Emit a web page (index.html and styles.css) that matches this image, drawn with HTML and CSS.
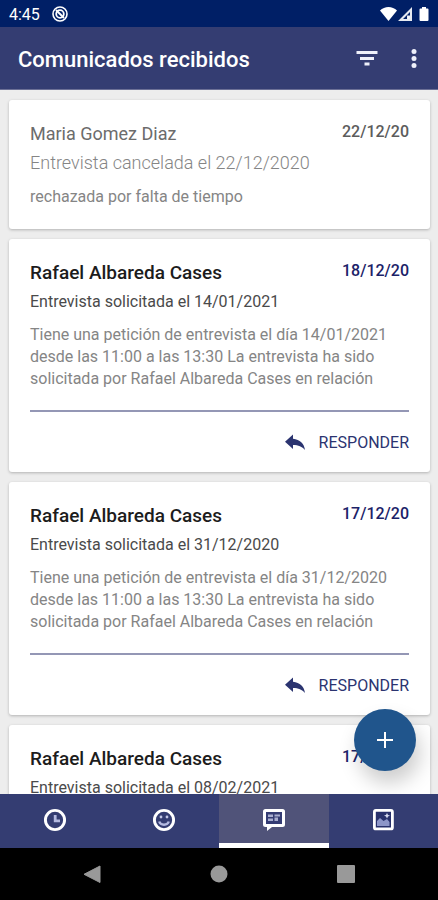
FILE: index.html
```html
<!DOCTYPE html>
<html lang="es">
<head>
    <meta charset="utf-8">
    <meta name="viewport" content="width=device-width, initial-scale=1">
    <title>Comunicados recibidos</title>
    <link rel="stylesheet" href="styles.css">
</head>
<body>
    <div class="status-bar">
        <span>4:45</span>
        <svg class="status-app" width="16" height="16" viewBox="0 0 16 16" fill="none" stroke="#fff">
            <circle cx="8" cy="8" r="7" stroke-width="1.6"/>
            <circle cx="8" cy="8" r="3.8" stroke-width="1.8"/>
            <path d="M4 4l8 8" stroke-width="2"/>
        </svg>
        <svg class="status-icons" width="50" height="16" viewBox="0 0 50 16" fill="#fff">
            <path d="M0 4.500C4.500-.2 12.500-.2 17 4.500L8.500 15z"/>
            <path d="M32 1v14H18zM30 6l-7 7h4V9.500h3z" fill-rule="evenodd" opacity=".9"/>
            <path d="M27.500 10h2v3h-2z" opacity=".6"/>
            <path d="M42 1h4v1.500h1.500q1 0 1 1V14q0 1-1 1h-7q-1 0-1-1V3.500q0-1 1-1H42z"/>
        </svg>
    </div>

    <header class="app-bar">
        <h1>Comunicados recibidos</h1>
        <button type="button" class="icon-button" aria-label="Filtrar">
            <svg width="24" height="24" viewBox="0 0 24 24" fill="#eef0fa">
                <path d="M1.500 4h21v3h-21zM5 10h14v3H5zM9.500 15.500h5v3h-5z"/>
            </svg>
        </button>
        <button type="button" class="icon-button" aria-label="Más opciones">
            <svg width="24" height="24" viewBox="0 0 24 24" fill="#eef0fa">
                <circle cx="12" cy="4.500" r="2.500"/>
                <circle cx="12" cy="11.500" r="2.500"/>
                <circle cx="12" cy="18.500" r="2.500"/>
            </svg>
        </button>
    </header>

    <main class="list">
        <article class="card card-read">
            <div class="card-head">
                <h2>Maria Gomez Diaz</h2>
                <time>22/12/20</time>
            </div>
            <h3>Entrevista cancelada el 22/12/2020</h3>
            <p>rechazada por falta de tiempo</p>
        </article>

        <article class="card">
            <div class="card-head">
                <h2>Rafael Albareda Cases</h2>
                <time>18/12/20</time>
            </div>
            <h3>Entrevista solicitada el 14/01/2021</h3>
            <p>Tiene una petición de entrevista el día 14/01/2021 desde las 11:00 a las 13:30 La entrevista ha sido solicitada por Rafael Albareda Cases en relación</p>
            <div class="card-actions">
                <button type="button" class="reply">
                    <svg width="20" height="16" viewBox="0 0 20 16" fill="#2b3470"><path d="M8 .5v4.300c7 .8 11 4.700 12 11.200C17 12.500 13.500 11 8 11v4L0 7.700z"/></svg>
                    RESPONDER
                </button>
            </div>
        </article>

        <article class="card">
            <div class="card-head">
                <h2>Rafael Albareda Cases</h2>
                <time>17/12/20</time>
            </div>
            <h3>Entrevista solicitada el 31/12/2020</h3>
            <p>Tiene una petición de entrevista el día 31/12/2020 desde las 11:00 a las 13:30 La entrevista ha sido solicitada por Rafael Albareda Cases en relación</p>
            <div class="card-actions">
                <button type="button" class="reply">
                    <svg width="20" height="16" viewBox="0 0 20 16" fill="#2b3470"><path d="M8 .5v4.300c7 .8 11 4.700 12 11.200C17 12.500 13.500 11 8 11v4L0 7.700z"/></svg>
                    RESPONDER
                </button>
            </div>
        </article>

        <article class="card">
            <div class="card-head">
                <h2>Rafael Albareda Cases</h2>
                <time>17/12/20</time>
            </div>
            <h3>Entrevista solicitada el 08/02/2021</h3>
        </article>
    </main>

    <div class="bottom">
        <button type="button" class="fab" aria-label="Nuevo comunicado">
            <svg width="16" height="16" viewBox="0 0 16 16" stroke="#fff" stroke-width="2"><path d="M8 0v16M0 8h16"/></svg>
        </button>
        <nav class="tabs">
            <a href="#" class="tab" aria-label="Horario">
                <svg width="24" height="24" viewBox="0 0 24 24" fill="none" stroke="#fff">
                    <circle cx="12" cy="12" r="9.600" stroke-width="2.900"/>
                    <path d="M12.200 7v5.800H17" stroke="#b4bae0" stroke-width="2.800"/>
                </svg>
            </a>
            <a href="#" class="tab" aria-label="Alumno">
                <svg width="24" height="24" viewBox="0 0 24 24" fill="none" stroke="#fff">
                    <circle cx="12" cy="12" r="9.600" stroke-width="2.900"/>
                    <path d="M7.200 13.500c1.300 4.300 8.300 4.300 9.600 0" stroke="#b4bae0" stroke-width="2.400"/>
                    <circle cx="9" cy="9" r="1.400" fill="#c3c8e6" stroke="none"/>
                    <circle cx="15" cy="9" r="1.400" fill="#c3c8e6" stroke="none"/>
                </svg>
            </a>
            <a href="#" class="tab tab-active" aria-label="Comunicados">
                <svg width="24" height="24" viewBox="0 0 24 24">
                    <path d="M3.500 1h17Q23 1 23 3.500v13q0 2.500-2.500 2.500H10l-5 4v-4H3.500Q1 19 1 16.500v-13Q1 1 3.500 1z" fill="#fff"/>
                    <path d="M4 4h16v12H4z" fill="#343c73"/>
                    <path d="M6 6.500h5V9H6zM6 10.500h5V13H6zM12.500 6.500H18V8.500h-5.500zM12.500 9.500H16V13h-3.500z" fill="#a9aed0"/>
                </svg>
            </a>
            <a href="#" class="tab" aria-label="Galería">
                <svg width="24" height="24" viewBox="0 0 24 24">
                    <rect x="3.400" y="2.400" width="18" height="18.500" rx="1.500" fill="#27306b" stroke="#fff" stroke-width="2.800"/>
                    <path d="M6 18v-5l3-3 3.500 3L16 11l2.500 3v4z" fill="#8d96c8"/>
                    <path d="M16 5l1 2 2 .5-2 1-1 2-1-2-2-1 2-.5z" fill="#d6daf0"/>
                </svg>
            </a>
        </nav>
    </div>

    <div class="system-nav">
        <button type="button" aria-label="Atrás">
            <svg width="18" height="18" viewBox="0 0 18 18" fill="#999"><path d="M17 1v16.500L1 9.300z" stroke="#999" stroke-linejoin="round"/></svg>
        </button>
        <button type="button" aria-label="Inicio">
            <svg width="18" height="18" viewBox="0 0 18 18" fill="#999"><circle cx="9" cy="9" r="8.500"/></svg>
        </button>
        <button type="button" aria-label="Recientes">
            <svg width="18" height="18" viewBox="0 0 18 18" fill="#999"><rect width="18" height="18" rx="1"/></svg>
        </button>
    </div>
</body>
</html>
```

FILE: styles.css
```css
* {
    box-sizing: border-box;
}
body {
    margin: 0;
    height: 100vh;
    display: flex;
    flex-direction: column;
    font-family: Roboto, sans-serif;
    background-color: #ededed;
    overflow: hidden;
}
h1, h2, h3, p {
    margin: 0;
}
button {
    font-family: inherit;
    border: none;
    background: none;
    padding: 0;
    cursor: pointer;
}
svg {
    display: block;
    flex: none;
}

/* top */
.status-bar {
    flex: none;
    display: flex;
    align-items: center;
    height: 27px;
    padding: 1px 8px 0 9px;
    background-color: #001f66;
    color: #fff;
    font-size: 16px;
}
.status-app {
    margin-left: 12px;
}
.status-icons {
    margin-left: auto;
}
.app-bar {
    flex: none;
    display: flex;
    align-items: center;
    height: 63px;
    padding: 2px 12px 0 18px;
    background-color: #343d72;
    border-bottom: 1px solid #6c7096;
    color: #fff;
}
.app-bar h1 {
    flex: 1;
    padding-top: 2px;
    font-size: 22px;
    font-weight: 500;
    line-height: 32px;
}
.icon-button + .icon-button {
    margin-left: 23px;
}

/* messages */
.list {
    flex: 1;
    min-height: 0;
    display: flex;
    flex-direction: column;
    gap: 10px;
    padding: 10px 8px 0 9px;
    overflow: hidden;
}
.card {
    flex: none;
    padding: 22px 21px 0;
    background-color: #fff;
    border-radius: 3px;
    box-shadow: 0 1px 3px rgba(0, 0, 0, 0.25);
}
.card-head {
    display: flex;
    justify-content: space-between;
}
.card h2 {
    font-size: 19px;
    font-weight: 500;
    line-height: 24px;
    color: #1c1c1c;
}
.card time {
    font-size: 16px;
    font-weight: 500;
    line-height: 20px;
    color: #1b2268;
}
.card h3 {
    margin-top: 5px;
    font-size: 16px;
    font-weight: 400;
    line-height: 24px;
    color: #4a4a4a;
}
.card p {
    margin-top: 10px;
    font-size: 16px;
    line-height: 22px;
    color: #858585;
}
.card-actions {
    display: flex;
    justify-content: flex-end;
    height: 62px;
    margin-top: 20px;
    border-top: 2px solid #9497b5;
}
.reply {
    display: flex;
    align-items: center;
    gap: 14px;
    font-size: 16px;
    color: #2b3470;
}
.card-read {
    padding-bottom: 21px;
}
.card.card-read h2 {
    font-size: 18px;
    font-weight: 400;
    color: #6c6c6c;
}
.card.card-read time {
    color: #5c5c5c;
}
.card.card-read h3 {
    font-size: 18px;
    font-weight: 300;
    color: #858585;
}
.card.card-read p {
    margin-top: 11px;
}

/* bottom */
.bottom {
    flex: none;
    position: relative;
}
.fab {
    position: absolute;
    right: 22px;
    bottom: 77px;
    width: 62px;
    height: 62px;
    display: flex;
    align-items: center;
    justify-content: center;
    border-radius: 50%;
    background-color: #20558c;
    box-shadow: 4px 12px 20px rgba(0, 0, 0, 0.2);
}
.tabs {
    position: relative;
    display: flex;
    height: 54px;
    background-color: #343d72;
}
.tab {
    flex: 1;
    display: flex;
    align-items: center;
    justify-content: center;
    border-top: 3px solid transparent;
    border-bottom: 5px solid transparent;
}
.tab-active {
    background-color: #505379;
    border-bottom-color: #fff;
}
.system-nav {
    flex: none;
    display: flex;
    align-items: center;
    justify-content: center;
    gap: 109px;
    height: 52px;
    background-color: #000;
}
```
